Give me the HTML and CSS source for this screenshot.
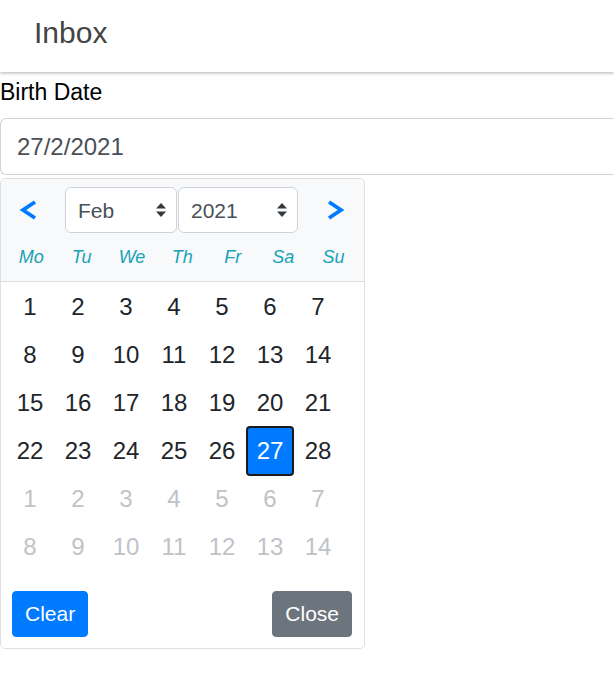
FILE: index.html
```html
<!DOCTYPE html>
<html lang="en">
<head>
<meta charset="utf-8">
<title>Inbox</title>
<link rel="stylesheet" href="styles.css">
</head>
<body>
<header class="toolbar">
  <div class="title">Inbox</div>
</header>
<main class="content">
  <label class="field-label" for="dob">Birth Date</label>
  <input id="dob" class="form-control" type="text" value="27/2/2021">
  <div class="datepicker">
    <div class="dp-header">
      <div class="dp-nav">
        <div class="dp-arrow dp-arrow-prev">
          <svg width="20" height="22" viewBox="0 0 20 22"><polyline points="17,3 5,11 17,19" fill="none" stroke="#007bff" stroke-width="3.8" stroke-miterlimit="10"/></svg>
        </div>
        <select class="dp-select dp-month"><option>Feb</option></select>
        <select class="dp-select dp-year"><option>2021</option></select>
        <div class="dp-arrow dp-arrow-next">
          <svg width="20" height="22" viewBox="0 0 20 22"><polyline points="3,3 15,11 3,19" fill="none" stroke="#007bff" stroke-width="3.8" stroke-miterlimit="10"/></svg>
        </div>
      </div>
      <div class="dp-weekdays">
        <div>Mo</div><div>Tu</div><div>We</div><div>Th</div><div>Fr</div><div>Sa</div><div>Su</div>
      </div>
    </div>
    <div class="dp-days">
      <div class="day">1</div><div class="day">2</div><div class="day">3</div><div class="day">4</div><div class="day">5</div><div class="day">6</div><div class="day">7</div>
      <div class="day">8</div><div class="day">9</div><div class="day">10</div><div class="day">11</div><div class="day">12</div><div class="day">13</div><div class="day">14</div>
      <div class="day">15</div><div class="day">16</div><div class="day">17</div><div class="day">18</div><div class="day">19</div><div class="day">20</div><div class="day">21</div>
      <div class="day">22</div><div class="day">23</div><div class="day">24</div><div class="day">25</div><div class="day">26</div><div class="day selected">27</div><div class="day">28</div>
      <div class="day muted">1</div><div class="day muted">2</div><div class="day muted">3</div><div class="day muted">4</div><div class="day muted">5</div><div class="day muted">6</div><div class="day muted">7</div>
      <div class="day muted">8</div><div class="day muted">9</div><div class="day muted">10</div><div class="day muted">11</div><div class="day muted">12</div><div class="day muted">13</div><div class="day muted">14</div>
    </div>
    <div class="dp-footer">
      <button class="btn btn-primary" type="button">Clear</button>
      <button class="btn btn-secondary" type="button">Close</button>
    </div>
  </div>
</main>
</body>
</html>
```

FILE: styles.css
```css
html, body {
  margin: 0;
  padding: 0;
  background: #fff;
  overflow: hidden;
  font-family: "Liberation Sans", Arial, sans-serif;
}

.toolbar {
  position: relative;
  z-index: 2;
  height: 72px;
  box-sizing: border-box;
  padding: 0 0 6px 34px;
  background: #fff;
  box-shadow: 0 1px 3px rgba(0, 0, 0, 0.22), 0 2px 3px rgba(0, 0, 0, 0.08);
}

.title {
  font-size: 30px;
  line-height: 66px;
  color: #444;
}

.content {
  display: flex;
  flex-direction: column;
  align-items: flex-start;
}

.field-label {
  display: block;
  font-size: 23px;
  line-height: 40px;
  color: #000;
  margin-bottom: 6px;
}

.form-control {
  box-sizing: border-box;
  width: 100%;
  height: 57px;
  margin: 0;
  padding: 0 16px;
  border: 1px solid #ced4da;
  border-right: 0;
  border-radius: 6px 0 0 6px;
  font-family: "Liberation Sans", Arial, sans-serif;
  font-size: 24px;
  color: #495057;
  background: #fff;
  outline: none;
}

.datepicker {
  box-sizing: border-box;
  width: 365px;
  margin-top: 3px;
  border: 1px solid #dfdfdf;
  border-radius: 5px;
  background: #fff;
  overflow: hidden;
}

.dp-header {
  background: #f8f9fa;
  border-bottom: 1px solid #dcdddf;
}

.dp-nav {
  display: flex;
  align-items: center;
  padding-top: 8px;
  height: 46px;
}

.dp-arrow {
  display: flex;
  align-items: center;
  height: 46px;
}

.dp-arrow svg {
  display: block;
}

.dp-arrow-prev {
  width: 64px;
}

.dp-arrow-prev svg {
  margin-left: 17px;
}

.dp-arrow-next {
  width: 66px;
}

.dp-arrow-next svg {
  margin-left: 28px;
}

.dp-select {
  -webkit-appearance: none;
  appearance: none;
  box-sizing: border-box;
  height: 46px;
  margin: 0;
  padding: 0 24px 0 12px;
  border: 1px solid #ced4da;
  border-radius: 6px;
  font-family: "Liberation Sans", Arial, sans-serif;
  font-size: 21px;
  color: #495057;
  background-color: #fff;
  background-image: url("data:image/svg+xml,%3Csvg xmlns='http://www.w3.org/2000/svg' viewBox='0 0 4 5' preserveAspectRatio='none'%3E%3Cpath fill='%23343a40' d='M2 0L0 2h4zm0 5L0 3h4z'/%3E%3C/svg%3E");
  background-repeat: no-repeat;
  background-position: right 10px center;
  background-size: 10px 14px;
  outline: none;
}

.dp-month {
  width: 112px;
  margin-right: 1px;
}

.dp-year {
  width: 120px;
}

.dp-weekdays {
  display: grid;
  grid-template-columns: repeat(7, 50.4px);
  padding-left: 5px;
  height: 48px;
}

.dp-weekdays div {
  text-align: center;
  line-height: 48px;
  font-size: 18px;
  font-style: italic;
  color: #17a2b8;
}

.dp-days {
  display: grid;
  grid-template-columns: repeat(7, 48px);
  grid-auto-rows: 48px;
  padding: 1px 0 0 5px;
}

.day {
  display: flex;
  align-items: center;
  justify-content: center;
  font-size: 24px;
  color: #212529;
  box-sizing: border-box;
  border-radius: 4px;
}

.day.muted {
  color: #bfc3c7;
}

.day.selected {
  background: #007bff;
  color: #fff;
  border: 2px solid #1b1b1b;
  height: 50px;
  margin-top: -1px;
}

.dp-footer {
  display: flex;
  justify-content: space-between;
  padding: 20px 12px 11px 11px;
}

.btn {
  box-sizing: border-box;
  height: 46px;
  padding: 0 12px;
  border: 1px solid transparent;
  border-radius: 4px;
  font-family: "Liberation Sans", Arial, sans-serif;
  font-size: 21px;
  color: #fff;
  cursor: pointer;
}

.btn-primary {
  background: #007bff;
  border-color: #007bff;
}

.btn-secondary {
  background: #6c757d;
  border-color: #6c757d;
}
```
